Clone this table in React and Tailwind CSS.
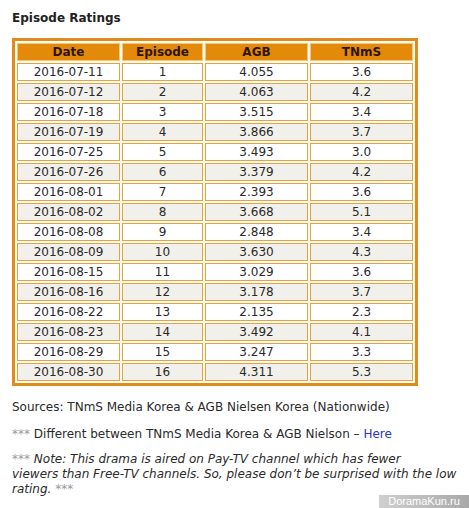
const rows = [
  ['2016-07-11', '1', '4.055', '3.6'],
  ['2016-07-12', '2', '4.063', '4.2'],
  ['2016-07-18', '3', '3.515', '3.4'],
  ['2016-07-19', '4', '3.866', '3.7'],
  ['2016-07-25', '5', '3.493', '3.0'],
  ['2016-07-26', '6', '3.379', '4.2'],
  ['2016-08-01', '7', '2.393', '3.6'],
  ['2016-08-02', '8', '3.668', '5.1'],
  ['2016-08-08', '9', '2.848', '3.4'],
  ['2016-08-09', '10', '3.630', '4.3'],
  ['2016-08-15', '11', '3.029', '3.6'],
  ['2016-08-16', '12', '3.178', '3.7'],
  ['2016-08-22', '13', '2.135', '2.3'],
  ['2016-08-23', '14', '3.492', '4.1'],
  ['2016-08-29', '15', '3.247', '3.3'],
  ['2016-08-30', '16', '4.311', '5.3'],
];

const widths = ['w-[103px]', 'w-[81px]', 'w-[103px]', 'w-[103px]'];

export default function App() {
  return (
    <div className="relative w-[469px] h-[508px] bg-white font-['DejaVu_Sans',Verdana,sans-serif] text-[12px] text-[#2a2a2a] pl-[12px] pt-[10px]">
      <h2 className="font-bold text-[12px] leading-[16px] text-[#222]">Episode Ratings</h2>

      <table className="mt-[12px] border-separate border-spacing-[2px] border-[3px] border-[#dd8c1d] bg-[#fffaf0] table-fixed">
        <thead>
          <tr>
            {['Date', 'Episode', 'AGB', 'TNmS'].map((h, i) => (
              <th
                key={h}
                className={`${widths[i]} h-[18px] p-0 border border-[#f3c77a] bg-[#e48a0a] text-[#2e1500] font-bold text-center leading-[16px]`}
              >
                {h}
              </th>
            ))}
          </tr>
        </thead>
        <tbody>
          {rows.map((r, idx) => (
            <tr key={r[0]}>
              {r.map((c, i) => (
                <td
                  key={i}
                  className={`h-[18px] p-0 border border-[#e3a343] text-center leading-[16px] ${idx % 2 ? 'bg-[#f2f0eb]' : 'bg-white'}`}
                >
                  {c}
                </td>
              ))}
            </tr>
          ))}
        </tbody>
      </table>

      <p className="mt-[13px] leading-[16px]">
        Sources: TNmS Media Korea &amp; AGB Nielsen Korea (Nationwide)
      </p>
      <p className="mt-[11px] leading-[16px]">
        <span className="text-[#999]">***</span> Different between TNmS Media Korea &amp; AGB Nielson –{' '}
        <a className="text-[#2b34c4]">Here</a>
      </p>
      <p className="mt-[10px] leading-[15px] italic w-[448px]">
        <span className="text-[#999]">***</span> Note: This drama is aired on Pay-TV channel which has fewer
        <br />
        viewers than Free-TV channels. So, please don’t be surprised with the low
        <br />
        rating. <span className="text-[#999]">***</span>
      </p>

      <div className="absolute right-0 bottom-0 w-[90px] h-[13px] bg-gradient-to-r from-[#cfcfcf] to-[#a9a9a9] text-white text-[11px] leading-[13px] text-center font-['Liberation_Sans',Arial,sans-serif]">
        DoramaKun.ru
      </div>
    </div>
  );
}
